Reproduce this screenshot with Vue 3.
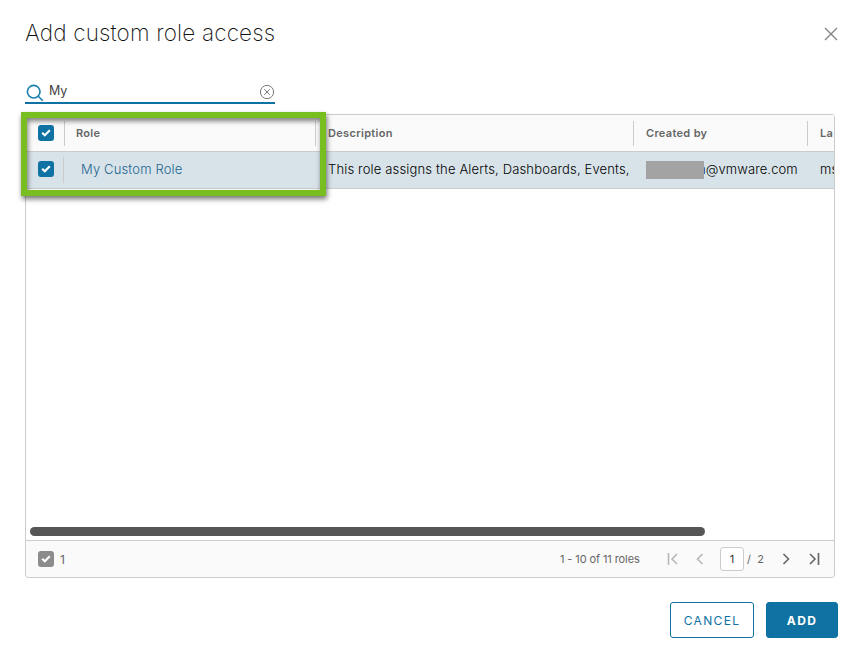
<script setup>
import { ref } from 'vue'

const query = ref('My')
const columns = ['Role', 'Description', 'Created by', 'La']
const rows = [
  {
    role: 'My Custom Role',
    description: 'This role assigns the Alerts, Dashboards, Events,',
    domain: 'n@vmware.com',
    updated: 'ms'
  }
]
</script>

<template>
  <main class="dialog">
    <header class="dialog-header">
      <h1>Add custom role access</h1>
      <svg class="close" viewBox="0 0 14 14"><path d="M1 1 13 13M13 1 1 13" /></svg>
    </header>

    <div class="search">
      <svg class="magnifier" viewBox="0 0 18 18"><circle cx="7.7" cy="7.7" r="6.3" /><path d="m12 12 4.8 4.8" /></svg>
      <span class="query">{{ query }}</span>
      <svg class="clear" viewBox="0 0 16 16"><circle cx="8" cy="8" r="6.6" /><path d="m5.2 5.2 5.6 5.6M10.8 5.2 5.2 10.8" /></svg>
    </div>

    <section class="datagrid">
      <div class="grid-row head">
        <div class="cell check"><span class="box"><svg viewBox="0 0 16 16"><path d="m4.2 7.7 2.6 2.6 5-5" /></svg></span></div>
        <div v-for="c in columns" :key="c" class="cell"><span class="label">{{ c }}</span></div>
      </div>
      <div v-for="r in rows" :key="r.role" class="grid-row body">
        <div class="cell check"><span class="box"><svg viewBox="0 0 16 16"><path d="m4.2 7.7 2.6 2.6 5-5" /></svg></span></div>
        <div class="cell role-cell"><a class="role-link">{{ r.role }}</a></div>
        <div class="cell"><span class="text">{{ r.description }}</span></div>
        <div class="cell"><span class="redacted"></span><span class="text domain">{{ r.domain }}</span></div>
        <div class="cell"><span class="text">{{ r.updated }}</span></div>
      </div>
      <div class="space"></div>
      <div class="scrollbar"></div>
      <footer class="grid-footer">
        <span class="box muted"><svg viewBox="0 0 16 16"><path d="m4.2 7.7 2.6 2.6 5-5" /></svg></span>
        <span class="count">1</span>
        <span class="summary">1 - 10 of 11 roles</span>
        <svg class="nav off" viewBox="0 0 12 12"><path d="M1.5 0v12M10 1 5 6l5 5" /></svg>
        <svg class="nav prev off" viewBox="0 0 12 12"><path d="M8.5 1 3.5 6l5 5" /></svg>
        <span class="page">1</span>
        <span class="total">/&nbsp; 2</span>
        <svg class="nav" viewBox="0 0 12 12"><path d="m3.5 1 5 5-5 5" /></svg>
        <svg class="nav last" viewBox="0 0 12 12"><path d="m2 1 5 5-5 5M10.5 0v12" /></svg>
      </footer>
      <div class="highlight"></div>
    </section>

    <div class="actions">
      <button class="cancel"><span>CANCEL</span></button>
      <button class="add"><span>ADD</span></button>
    </div>
  </main>
</template>

<style>
body { margin: 0; background: #fff; }
</style>

<style scoped>
.dialog { box-sizing: border-box; width: 857px; height: 655px; padding: 16px 19px 0 25px; font-family: Inter, "Open Sans", sans-serif; color: #222; overflow: hidden; }
svg { display: block; fill: none; flex: none; }
.dialog-header { display: flex; justify-content: space-between; height: 64px; }
h1 { margin: 0; font-size: 22.5px; font-weight: 200; line-height: 33px; letter-spacing: .17px; color: #111; white-space: nowrap; }
.close { width: 14px; height: 14px; margin-top: 11px; stroke: #858585; stroke-width: 1.4; }
.search { display: flex; box-sizing: border-box; width: 250px; height: 24px; border-bottom: 2px solid #0f72a3; }
.magnifier { width: 18px; height: 18px; margin: 4px 5px 0 1px; stroke: #1b7fb0; stroke-width: 1.6; }
.query { flex: 1; font-size: 12.5px; line-height: 21px; color: #444; }
.clear { width: 16px; height: 16px; margin-top: 4px; stroke: #777; stroke-width: 1; }
.datagrid { position: relative; display: flex; flex-direction: column; box-sizing: border-box; width: 810px; height: 464px; margin-top: 10px; border: 1px solid #ccc; border-radius: 3px; }
.grid-row { display: grid; grid-template-columns: 39px 251px 318px 174px 26px; height: 36px; border-bottom: 1px solid #ccc; overflow: hidden; }
.head { background: #fafafa; }
.body { background: #d8e3e9; }
.cell { display: flex; align-items: center; box-sizing: border-box; padding: 0 0 2px 12px; overflow: hidden; white-space: nowrap; }
.head .cell { height: 25px; margin-top: 6px; border-right: 1px solid #ccc; }
.head .cell:last-child { border-right: 0; }
.head .cell:nth-child(2) { padding-left: 11px; }
.body .check { width: 38px; height: 26px; margin-top: 5px; border-right: 1px solid #ccc; }
.body .role-cell { padding-left: 16px; }
.label { font-size: 11px; font-weight: 600; line-height: 16px; letter-spacing: .32px; color: #666; }
.role-link { font-size: 13px; font-weight: 300; color: #1a648f; letter-spacing: .15px; }
.text { font-size: 13px; font-weight: 300; letter-spacing: .16px; color: #000; }
.redacted { width: 58px; height: 18px; margin: 2px 0 0; background: #a3a3a3; flex: none; z-index: 1; }
.domain { margin-left: -6px; letter-spacing: .1px; }
.box { display: block; width: 16px; height: 16px; border-radius: 3px; background: #0f72a3; flex: none; }
.box svg { width: 16px; height: 16px; stroke: #fff; stroke-width: 2.2; }
.muted { background: #8c8c8c; }
.space { flex: 1; }
.scrollbar { width: 675px; height: 9px; margin: 0 0 4px 4px; border-radius: 5px; background: #565656; }
.grid-footer { display: flex; align-items: center; box-sizing: border-box; height: 37px; padding-left: 12px; border-top: 1px solid #ccc; border-radius: 0 0 3px 3px; background: #fafafa; font-size: 11px; color: #666; white-space: nowrap; }
.count { width: 500px; margin-left: 6px; font-size: 12px; flex: none; }
.summary { width: 107px; letter-spacing: -.1px; flex: none; }
.nav { width: 12px; height: 12px; stroke: #666; stroke-width: 1.6; }
.off { stroke: #b8b8b8; }
.prev { margin-left: 15px; }
.page { box-sizing: border-box; width: 24px; height: 24px; margin: 0 3px 0 14px; border: 1px solid #ccc; border-radius: 3px; background: #fff; line-height: 22px; text-align: center; color: #333; flex: none; }
.total { width: 33px; flex: none; }
.last { margin-left: 16px; }
.highlight { position: absolute; left: -5px; top: -3px; box-sizing: border-box; width: 305px; height: 84px; border: 6px solid #78be20; box-shadow: 1px 3px 5px rgba(0,0,0,.55), inset 1px 3px 5px rgba(0,0,0,.5); }
.actions { display: flex; justify-content: flex-end; gap: 12px; margin-top: 24px; }
button { box-sizing: border-box; height: 36px; margin: 0; padding: 0; border: 1px solid #0f72a3; border-radius: 3px; font-family: inherit; font-size: 12px; letter-spacing: 1.35px; }
.cancel { width: 84px; background: #fff; color: #0f72a3; }
.add { width: 72px; background: #0f72a3; color: #fff; font-weight: 700; }
</style>
